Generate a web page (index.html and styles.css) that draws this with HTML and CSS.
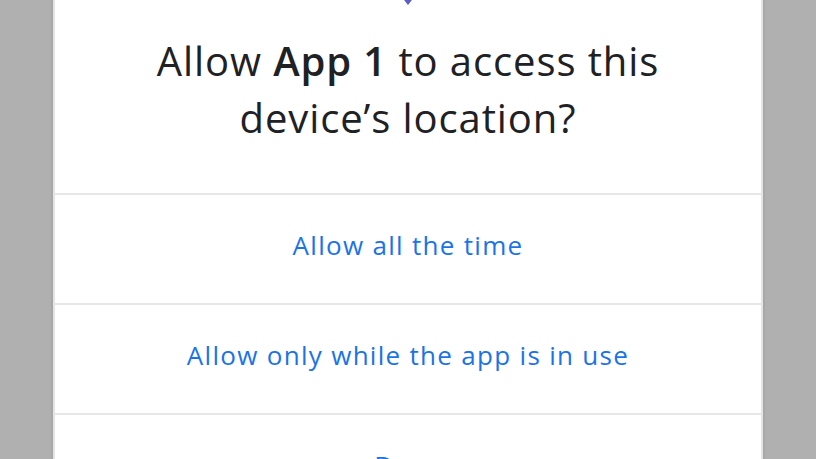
FILE: index.html
```html
<!DOCTYPE html>
<html>
<head>
<meta charset="utf-8">
<link rel="stylesheet" href="styles.css">
</head>
<body>
<div class="screen">
  <div class="dialog">
    <div class="header">
      <div class="icon">
        <svg width="24" height="24" viewBox="0 0 24 24"><path d="M12 2C8.1 2 5 5.1 5 9c0 5.2 7 13 7 13s7-7.8 7-13c0-3.9-3.1-7-7-7z" fill="#5b5fc7"/></svg>
      </div>
      <h1 class="title">Allow <b>App 1</b> to access this device’s location?</h1>
    </div>
    <div class="option">Allow all the time</div>
    <div class="option">Allow only while the app is in use</div>
    <div class="option">Deny</div>
  </div>
</div>
</body>
</html>
```
FILE: styles.css
```css
html, body {
  margin: 0;
  padding: 0;
}
body {
  background: #b0b0b0;
  width: 816px;
  height: 459px;
  overflow: hidden;
  font-family: "Open Sans", sans-serif;
}
.screen {
  display: flex;
  justify-content: center;
  height: 459px;
  overflow: hidden;
}
.dialog {
  width: 710px;
  background: #fff;
  border-left: 2px solid #a8a8a8;
  border-right: 2px solid #a8a8a8;
  box-shadow: inset 2px 0 0 #e4e4e4, inset -2px 0 0 #e4e4e4;
  display: flex;
  flex-direction: column;
  flex: none;
}
.header {
  flex: none;
  height: 193px;
  display: flex;
  flex-direction: column;
  align-items: center;
  border-bottom: 2px solid #e6e6e6;
}
.icon {
  height: 7px;
  overflow: hidden;
  display: flex;
  align-items: flex-end;
}
.icon svg {
  display: block;
  flex: none;
}
.title {
  margin: 25px 0 0;
  width: 580px;
  text-align: center;
  font-size: 40px;
  line-height: 57px;
  letter-spacing: 0.9px;
  font-weight: 400;
  color: #202124;
}
.title b {
  font-weight: 600;
}
.option {
  flex: none;
  height: 110px;
  box-sizing: border-box;
  padding-bottom: 9px;
  display: flex;
  align-items: center;
  justify-content: center;
  font-size: 26px;
  letter-spacing: 1.3px;
  color: #1a73e8;
  border-bottom: 2px solid #e6e6e6;
}
```
